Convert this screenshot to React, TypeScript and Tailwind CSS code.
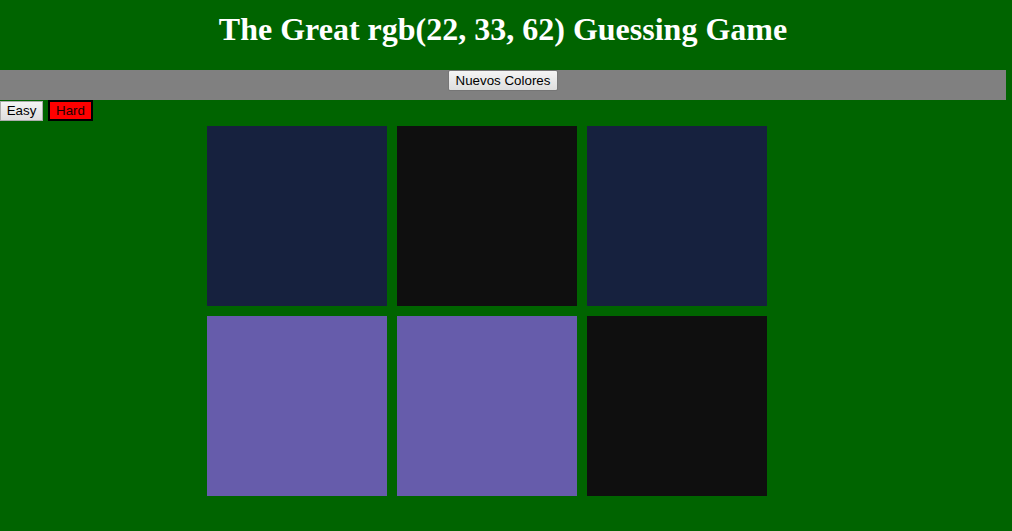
const squares = ['#16213e', '#0f0f0f', '#16213e', '#665cab', '#665cab', '#0f0f0f']

export default function App() {
  return (
    <div className="min-h-screen w-full bg-[#006400]">
      <div className="w-[1006px]">
        {/* Title */}
        <h1 className="pt-[11px] pb-[22px] text-center text-[32px] leading-[37px] font-bold text-white font-['Liberation_Serif',serif]">
          The Great rgb(22, 33, 62) Guessing Game
        </h1>

        {/* Stripe */}
        <div className="h-[30px] bg-[#808080] flex justify-center items-start">
          <button className="h-[21px] px-[7px] border border-[#767676] rounded-[2px] bg-gradient-to-b from-[#f4f4f4] to-[#dedede] text-[13.33px] leading-[17px] text-black font-['Liberation_Sans',Arial,sans-serif]">
            Nuevos Colores
          </button>
        </div>

        {/* Mode buttons */}
        <div className="flex gap-[5px] h-[21px] items-start font-['Liberation_Sans',Arial,sans-serif]">
          <button className="mt-[1px] h-[20px] w-[43px] border border-[#adadad] bg-gradient-to-b from-[#f4f4f4] to-[#dedede] text-[13.33px] leading-[16px] text-black">
            Easy
          </button>
          <button className="h-[21px] w-[45px] border-2 border-black bg-[#ff0000] text-[13.33px] leading-[16px] text-[#1a0000]">
            Hard
          </button>
        </div>

        {/* Squares */}
        <div className="mt-[5px] ml-[207px] grid grid-cols-[repeat(3,180px)] gap-[10px]">
          {squares.map((c, i) => (
            <div key={i} className="h-[180px] w-[180px]" style={{ backgroundColor: c }} />
          ))}
        </div>
      </div>
    </div>
  )
}
